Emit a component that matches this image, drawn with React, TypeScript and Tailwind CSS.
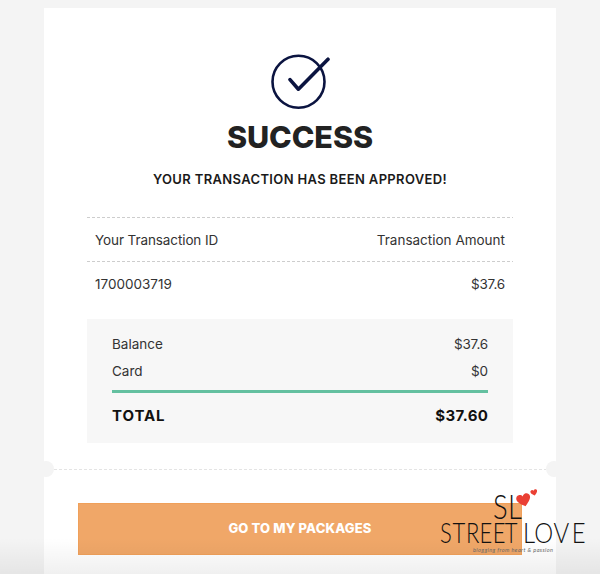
const HEART =
  "M12 21.5 C9 18.6 1 13.4 1 7.6 C1 4.2 3.6 2 6.4 2 C8.8 2 10.9 3.4 12 5.6 C13.1 3.4 15.2 2 17.6 2 C20.4 2 23 4.2 23 7.6 C23 13.4 15 18.6 12 21.5 Z";

function SuccessIcon() {
  return (
    <svg width="60" height="58" viewBox="0 0 60 58" fill="none" stroke="#0b1440">
      <circle cx="28.5" cy="29.7" r="26" strokeWidth="2.6" />
      <path
        d="M20 27.6 L28.4 37.2 L58 7.2"
        strokeWidth="3.6"
        strokeLinecap="round"
        strokeLinejoin="round"
      />
    </svg>
  );
}

function DashedLine({ color }: { color: string }) {
  return (
    <svg className="block h-px w-full" shapeRendering="crispEdges">
      <line
        x1="0"
        y1="0.5"
        x2="100%"
        y2="0.5"
        stroke={color}
        strokeDasharray="3 2"
      />
    </svg>
  );
}

function Watermark() {
  return (
    <svg
      className="absolute top-[484px] left-[436px]"
      width="156"
      height="76"
      viewBox="436 484 156 76"
    >
      <g fill="#111111" fontFamily="Lato, sans-serif" fontWeight="300">
        <text x="0 18" y="519.5" fontSize="33" transform="translate(493 0) scale(0.83 1)">
          SL
        </text>
        <text
          x="0 15.5 32.5 49.5 66 81"
          y="543.5"
          fontSize="27.5"
          transform="translate(440 0) scale(0.8 1)"
        >
          STREET
        </text>
        <text
          x="0 13 35 56"
          y="543.5"
          fontSize="27.5"
          transform="translate(523 0) scale(0.87 1)"
        >
          LOVE
        </text>
      </g>
      <text
        x="473"
        y="551.5"
        fontSize="5.5"
        fontStyle="italic"
        fontFamily="Lato, sans-serif"
        fill="#666666"
        textLength="80"
      >
        blogging from heart &amp; passion
      </text>
      <g fill="#ea4034">
        <path d={HEART} transform="translate(515.8 493) rotate(-16 7 6) scale(0.64)" />
        <path d={HEART} transform="translate(530.2 489.2) rotate(-14 3 3) scale(0.31)" />
      </g>
    </svg>
  );
}

const summary = [
  { label: "Balance", value: "$37.6" },
  { label: "Card", value: "$0" },
];

export default function App() {
  return (
    <div className="relative flex h-[574px] w-[600px] flex-col overflow-hidden bg-[#f4f4f4] px-11 pt-2 font-['Inter',sans-serif] text-[#333333]">
      <main className="flex w-full flex-1 flex-col bg-white">
        <section className="flex flex-col items-center pt-11">
          <SuccessIcon />
          <h1 className="mt-2 text-[30.5px] leading-[38px] font-extrabold tracking-[-0.05px] text-[#222222]">
            SUCCESS
          </h1>
          <p className="mt-[13px] text-[13px] leading-5 font-semibold tracking-[0.35px] text-[#1a1a1a]">
            YOUR TRANSACTION HAS BEEN APPROVED!
          </p>
        </section>

        <section className="mt-[28px] px-[43px] text-[13.5px]">
          <DashedLine color="#cdcdcd" />
          <div className="flex h-[43px] items-center justify-between px-2 pt-[2px]">
            <span className="tracking-[-0.1px]">Your Transaction ID</span>
            <span>Transaction Amount</span>
          </div>
          <DashedLine color="#cdcdcd" />
          <div className="flex h-[43px] items-center justify-between px-2 pt-[2px]">
            <span>1700003719</span>
            <span className="tracking-[-0.15px]">$37.6</span>
          </div>

          <div className="mt-[14px] h-[124px] bg-[#f7f7f7] px-[25px] pt-3">
            {summary.map((row) => (
              <div key={row.label} className="flex h-[26.5px] items-center justify-between">
                <span>{row.label}</span>
                <span className="tracking-[-0.15px]">{row.value}</span>
              </div>
            ))}
            <div className="mt-[6px] h-[2.5px] bg-[#64c0a0]" />
            <div className="mt-[11px] flex justify-between text-[15px] leading-6 font-bold tracking-[0.4px] text-[#111111]">
              <span className="tracking-[0.9px]">TOTAL</span>
              <span className="-mr-[0.4px]">$37.60</span>
            </div>
          </div>
        </section>

        {/* Ticket tear line */}
        <div className="-mx-1.5 mt-[18px] flex items-center">
          <span className="h-4 w-4 rounded-full bg-[#f4f4f4]" />
          <div className="flex-1">
            <DashedLine color="#e4e4e4" />
          </div>
          <span className="h-4 w-4 rounded-full bg-[#f4f4f4]" />
        </div>

        <button className="mx-[34px] mt-[26px] h-[52px] border border-[#f0a05a] bg-[#f0a768] text-[13px] font-extrabold tracking-[0.15px] text-white">
          GO TO MY PACKAGES
        </button>
      </main>

      <div className="absolute inset-x-0 bottom-0 h-9 bg-gradient-to-b from-black/0 to-black/6" />
      <Watermark />
    </div>
  );
}
